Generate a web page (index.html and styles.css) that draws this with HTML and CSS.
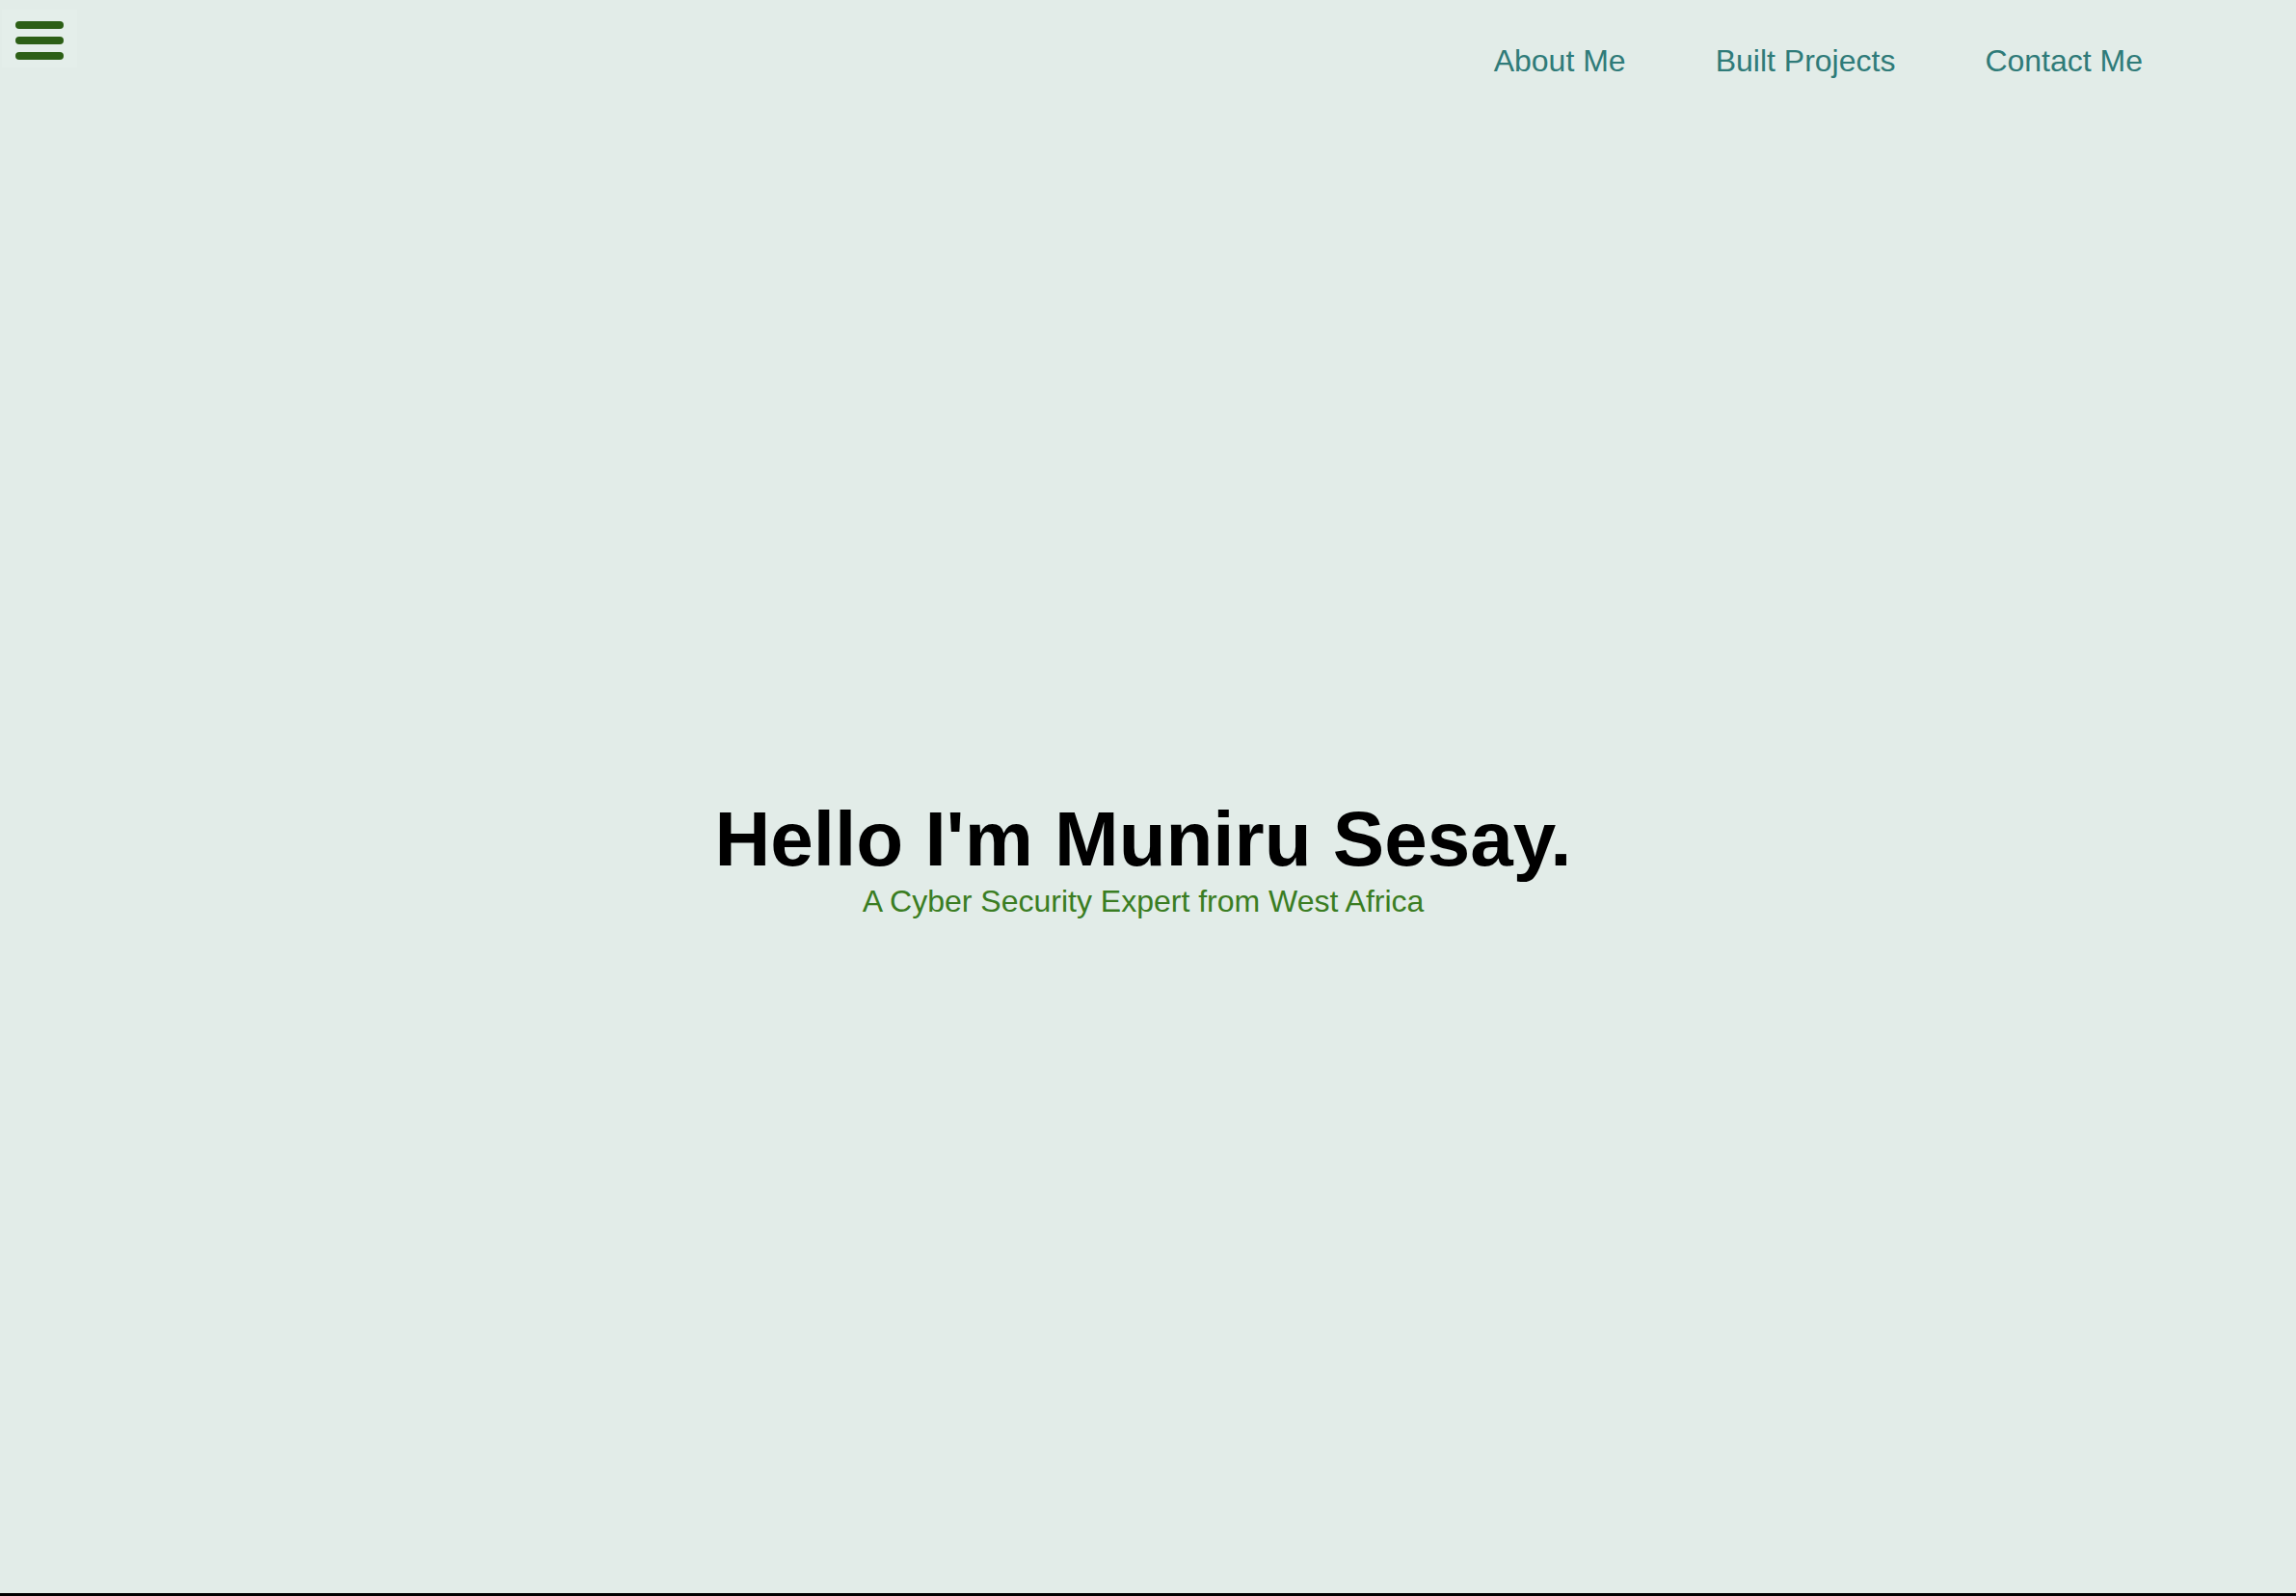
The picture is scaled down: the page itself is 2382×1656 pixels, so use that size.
FILE: index.html
```html
<!DOCTYPE html>
<html lang="en">
<head>
<meta charset="utf-8">
<title>Muniru Sesay</title>
<link rel="stylesheet" href="styles.css">
</head>
<body>
<div class="page">
  <header class="topbar">
    <button class="menu-btn" aria-label="Menu">
      <span class="bar"></span>
      <span class="bar"></span>
      <span class="bar"></span>
    </button>
    <nav class="nav">
      <a class="nav-link" href="#about">About Me</a>
      <a class="nav-link" href="#projects">Built Projects</a>
      <a class="nav-link" href="#contact">Contact Me</a>
    </nav>
  </header>
  <main class="hero">
    <h1 class="hero-title">Hello I'm Muniru Sesay.</h1>
    <p class="hero-sub">A Cyber Security Expert from West Africa</p>
  </main>
</div>
</body>
</html>
```
FILE: styles.css
```css
html, body {
  margin: 0;
  padding: 0;
}
body {
  background: #e2ece8;
  font-family: "Liberation Sans", Arial, Helvetica, sans-serif;
}
.page {
  height: 100vh;
  box-sizing: border-box;
  border-bottom: 3px solid #000;
  display: flex;
  flex-direction: column;
}
.topbar {
  display: flex;
  justify-content: space-between;
  align-items: flex-start;
  height: 90px;
  flex: none;
}
.menu-btn {
  margin: 10px 0 0 2px;
  width: 78px;
  height: 60px;
  box-sizing: border-box;
  padding: 12px 14px 8px;
  border: none;
  background: #e4eeea;
  display: flex;
  flex-direction: column;
  gap: 8px;
  cursor: pointer;
}
.bar {
  display: block;
  width: 50px;
  height: 8px;
  border-radius: 4px;
  background: #2c5f16;
}
.nav {
  display: flex;
  gap: 93px;
  margin-top: 47px;
  padding-right: 159px;
}
.nav-link {
  font-size: 32px;
  line-height: 1;
  color: #2f7b79;
  text-decoration: none;
}
.hero {
  flex: 1;
  display: flex;
  flex-direction: column;
  align-items: center;
  justify-content: center;
  padding: 38px 10px 0 0;
}
.hero-title {
  margin: 0;
  font-size: 80px;
  line-height: 1;
  font-weight: 700;
  color: #000;
}
.hero-sub {
  margin: 8px 0 0;
  font-size: 32px;
  line-height: 1;
  color: #3a7d22;
}
```
